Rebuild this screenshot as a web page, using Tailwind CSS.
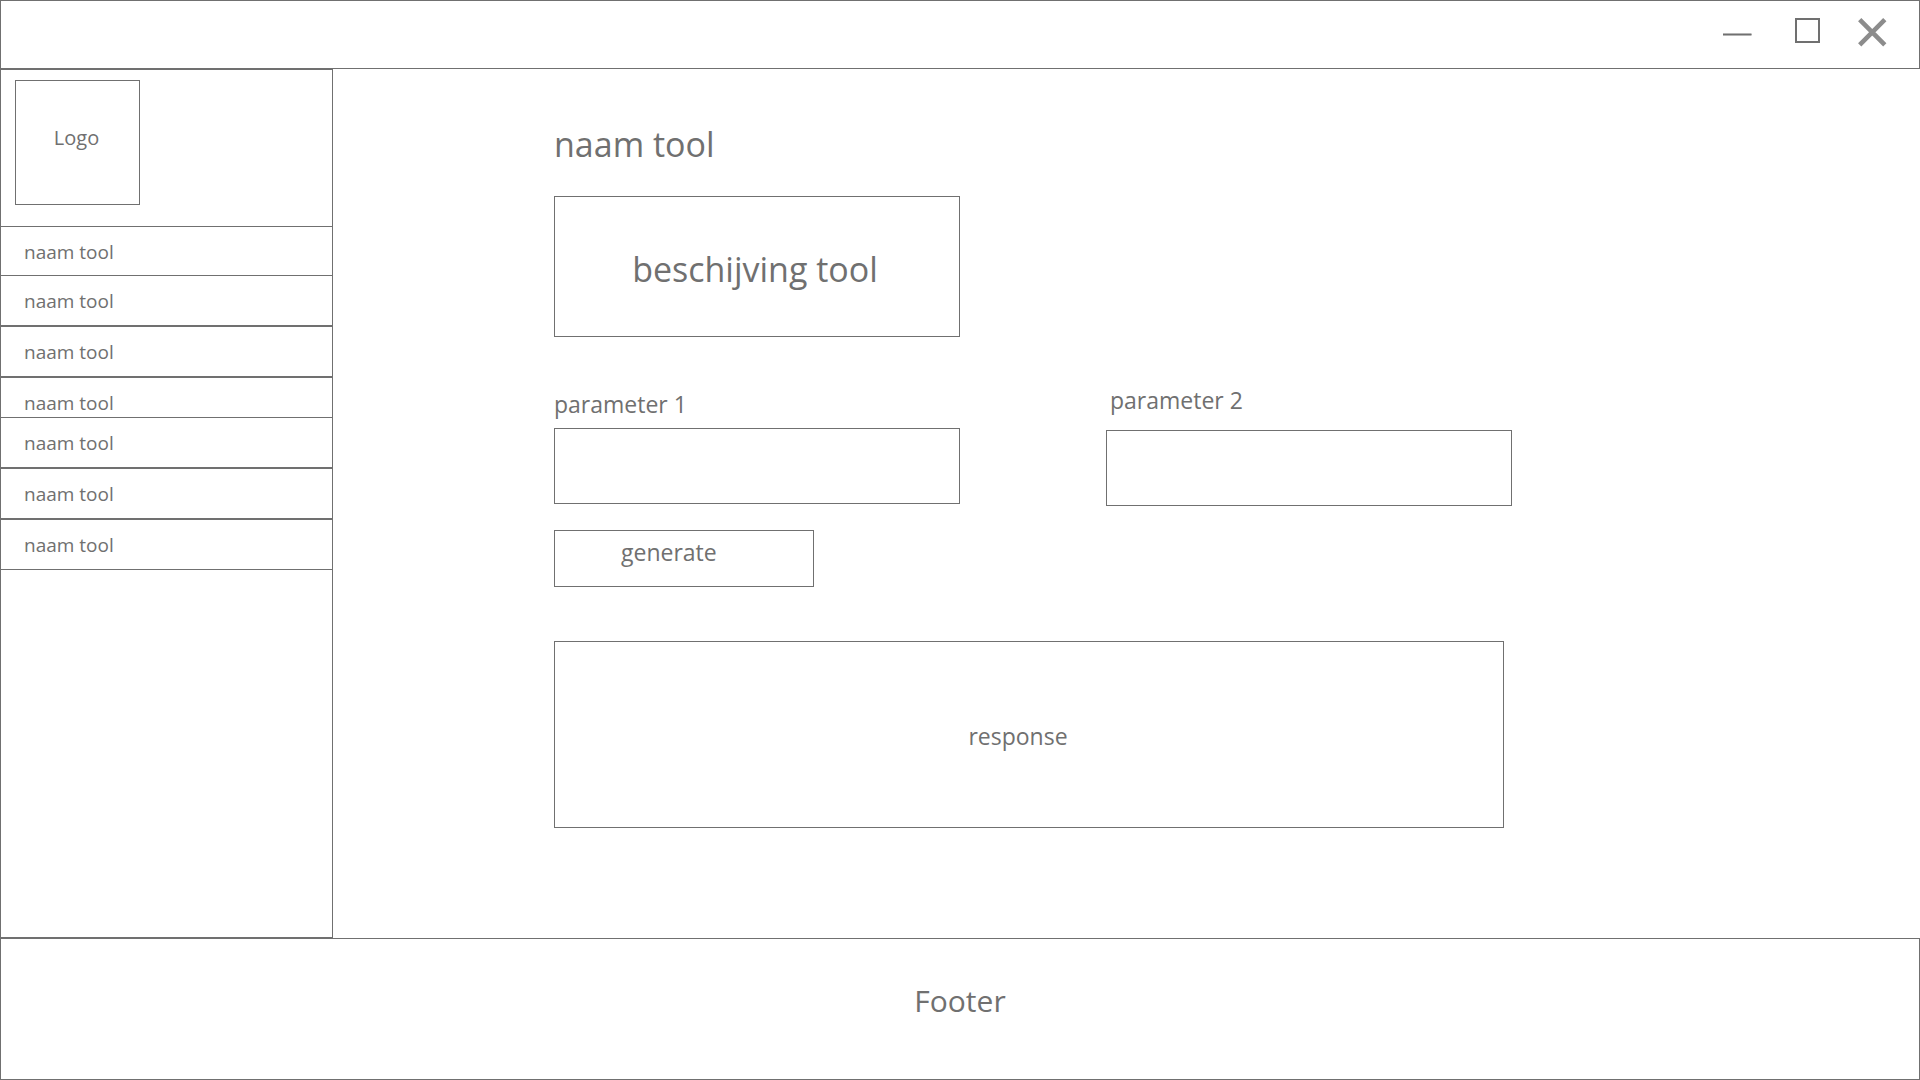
<!DOCTYPE html>
<html lang="nl">
<head>
<meta charset="utf-8">
<meta name="viewport" content="width=device-width, initial-scale=1">
<title>naam tool</title>
<script src="https://cdn.jsdelivr.net/npm/@tailwindcss/browser@4"></script>
</head>
<body class="flex min-h-screen flex-col bg-white font-['Open_Sans','Noto_Sans',sans-serif] text-[#707070]">

  <!-- Window title bar -->
  <header class="flex h-[69px] shrink-0 items-start justify-end border border-[#707070] pt-4 pr-8">
    <button type="button" aria-label="Minimize" class="mr-[42px]">
      <svg class="block h-8 w-[30px]" viewBox="0 0 30 32" fill="none"><path d="M1 17.5H29.5" stroke="#b4b4b4" stroke-width="3"/><path d="M1 17.5H29.5" stroke="#707070" stroke-width="1"/></svg>
    </button>
    <button type="button" aria-label="Maximize" class="mr-[37px]">
      <svg class="block h-8 w-[26px]" viewBox="0 0 26 32" fill="none"><rect x="2" y="2" width="23" height="23" stroke="#707070" stroke-width="2"/></svg>
    </button>
    <button type="button" aria-label="Close">
      <svg class="block h-8 w-[30px]" viewBox="0 0 30 32" fill="none"><path d="M2.7 2.7L27.8 27.8M27.8 2.7L2.7 27.8" stroke="#8c8c8c" stroke-width="4.6"/></svg>
    </button>
  </header>

  <div class="flex flex-1">
    <!-- Sidebar -->
    <aside class="w-[333px] shrink-0 border border-[#707070]">
      <div class="pt-[10px] pb-[21px] pl-[14px]">
        <div class="flex size-[125px] items-center justify-center border border-[#707070] pr-[2px] pb-[10px] text-[20px] leading-6">Logo</div>
      </div>
      <nav class="-mx-px">
        <ul>
          <li><a href="#" class="flex h-[51px] items-center border border-[#707070] bg-white pl-[23px] text-[19px] leading-6">naam tool</a></li>
          <li class="relative -mt-[2px]"><a href="#" class="flex h-[51px] items-center border border-[#707070] bg-white pl-[23px] text-[19px] leading-6">naam tool</a></li>
          <li><a href="#" class="flex h-[51px] items-center border border-[#707070] bg-white pl-[23px] text-[19px] leading-6">naam tool</a></li>
          <li><a href="#" class="flex h-[51px] items-center border border-[#707070] bg-white pl-[23px] text-[19px] leading-6">naam tool</a></li>
          <li class="relative -mt-[11px]"><a href="#" class="flex h-[51px] items-center border border-[#707070] bg-white pl-[23px] text-[19px] leading-6">naam tool</a></li>
          <li><a href="#" class="flex h-[51px] items-center border border-[#707070] bg-white pl-[23px] text-[19px] leading-6">naam tool</a></li>
          <li><a href="#" class="flex h-[51px] items-center border border-[#707070] bg-white pl-[23px] text-[19px] leading-6">naam tool</a></li>
        </ul>
      </nav>
    </aside>

    <!-- Selected tool -->
    <main class="min-w-0 flex-1 pt-[51px] pr-8 pb-8 pl-[221px]">
      <h1 class="text-[34px] leading-[48px]">naam tool</h1>
      <p class="mt-7 flex h-[141px] w-full max-w-[406px] items-center justify-center border border-[#707070] pt-1 pr-1 text-[34px] leading-[48px]">beschijving tool</p>

      <form>
        <div class="mt-[47px] flex items-start gap-[146px]">
          <div class="flex w-full max-w-[406px] flex-col gap-2 pt-1">
            <label for="parameter-1" class="text-[23px] leading-8">parameter 1</label>
            <input id="parameter-1" type="text" class="h-[76px] w-full border border-[#707070] px-4 text-[23px] outline-none">
          </div>
          <div class="flex w-full max-w-[406px] flex-col gap-[14px]">
            <label for="parameter-2" class="pl-1 text-[23px] leading-8">parameter 2</label>
            <input id="parameter-2" type="text" class="h-[76px] w-full border border-[#707070] px-4 text-[23px] outline-none">
          </div>
        </div>
        <button type="button" class="mt-6 flex h-[57px] w-[260px] items-start border border-[#707070] pt-[5px] pl-[66px] text-[23px] leading-8">generate</button>
        <output for="parameter-1 parameter-2" class="mt-[54px] flex h-[187px] w-full max-w-[950px] items-center justify-center border border-[#707070] pt-[2px] pr-[22px] text-[23px] leading-8">response</output>
      </form>
    </main>
  </div>

  <footer class="flex h-[142px] shrink-0 items-center justify-center border border-[#707070] pb-4 text-[30px] leading-10">Footer</footer>
</body>
</html>
